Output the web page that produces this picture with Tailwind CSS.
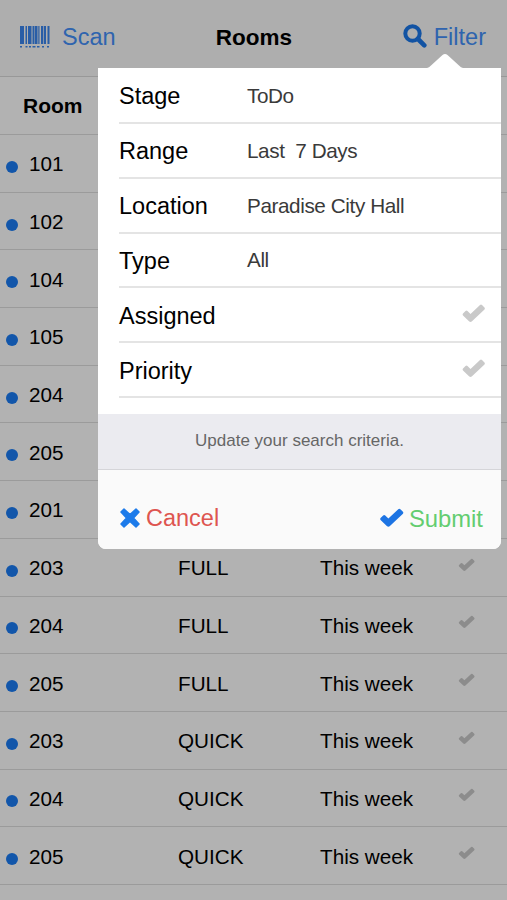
<!DOCTYPE html>
<html lang="en">
<head>
  <meta charset="UTF-8" />
  <meta name="viewport" content="width=device-width, initial-scale=1.0"/>
  <title>Rooms</title>

  <!-- Tailwind CSS -->
  <script src="https://cdn.jsdelivr.net/npm/@tailwindcss/browser@4"></script>
</head>
<body class="relative h-[900px] overflow-hidden bg-white font-['Liberation_Sans',Arial,sans-serif] text-black">

  <!-- Icons -->
  <svg class="hidden">
    <symbol id="check" viewBox="0 0 24 19">
      <path d="M1.500 9.500L4 7Q5 6 6 7L9 10L18.500 1Q19.500 0 20.500 1L23 3.500Q23.800 4.500 23 5.500L10.500 17.300Q9 18.600 7.500 17.300L1.500 11.500Q0.600 10.500 1.500 9.500z" fill="currentColor"/>
    </symbol>
  </svg>

  <!-- Nav bar -->
  <header class="grid h-[77px] grid-cols-3 items-center border-b border-[#dadada] bg-[#f9f9f9] pt-[1px] pb-[2px] pl-5 pr-[21px]">
    <button class="flex items-center gap-3 text-[23.5px] text-[#4490fa]">
      <svg class="-mt-[2px] h-[22px] w-[30px] text-[#3b86ee]" viewBox="0 0 30 22" fill="currentColor">
        <path d="M0 0h4v18H0zM5.500 0h1.500v18h-1.500zM8 0h3.500v18H8zM12.500 0h2v18h-2zM15 0h2.500v18H15zM18.300 0h1.200v18h-1.200zM21 0h2v18h-2zM23.700 0h2.300v18h-2.300zM27.500 0h2v18h-2z"/>
        <path d="M0 20h2v1.500H0zM5.500 20h2v1.500h-2zM9 20h2v1.500H9zM12.500 20h3v1.500h-3zM17 20h2.500v1.500H17zM22 20h2v1.500h-2zM27 20h2v1.500h-2z"/>
      </svg>
      <span class="pt-px">Scan</span>
    </button>
    <h1 class="pl-[2px] text-center text-[22.5px] font-bold">Rooms</h1>
    <button class="flex items-center justify-end gap-[7px] text-[23.5px] text-[#4490fa]">
      <svg class="-mt-[3px] h-6 w-6 text-[#1b78ea]" viewBox="0 0 24 24" fill="none" stroke="currentColor">
        <circle cx="9.500" cy="9.500" r="7.200" stroke-width="4"/>
        <path d="M15 15L21.300 21.300" stroke-width="4.600" stroke-linecap="round"/>
      </svg>
      <span class="pt-px">Filter</span>
    </button>
  </header>

  <!-- Room list -->
  <div class="flex h-[58px] items-center border-b border-[#dedede] pl-[23px] text-[21px] font-bold">Room</div>
  <div id="roomList"></div>

  <!-- Dimmed backdrop -->
  <div class="absolute inset-0 bg-black/30"></div>

  <!-- Filter popover -->
  <div class="absolute left-[98px] top-[54px] w-[403px]">
    <svg class="ml-[329px] block h-[14px] w-9" viewBox="0 0 36 14"><path d="M0 14Q2 13.500 4 11.500L15.500 1Q18 -1 20.500 1L32 11.500Q34 13.500 36 14z" fill="#fff"/></svg>
    <div class="overflow-hidden rounded-b-[8px] bg-white">
      <div id="filters" class="h-[345.500px] pt-px pl-[21px]"></div>
      <div class="flex h-[56px] items-center justify-center border-b border-[#d5d5d9] bg-[#ebebf0] text-[17px] text-[#666]">Update your search criteria.</div>
      <div class="flex h-[79px] items-center justify-between bg-[#fafafa] pt-[20px] pr-[18px] pl-[22px] text-[23.500px]">
        <button class="flex items-center gap-[6px] text-[#de5550]">
          <svg class="-mt-[3px] h-5 w-5 text-[#1d7bea]" viewBox="0 0 20 20"><path d="M4 1L10 6.500L16 1L19 4L13.500 10L19 16L16 19L10 13.500L4 19L1 16L6.500 10L1 4z" fill="currentColor" stroke="currentColor" stroke-width="1.500" stroke-linejoin="round"/></svg>
          <span>Cancel</span>
        </button>
        <button class="flex items-center gap-[5px] text-[#63cd70]">
          <svg class="-mt-[3px] h-[20px] w-[25px] text-[#1d74e3]"><use href="#check"/></svg>
          <span class="text-[23.800px]">Submit</span>
        </button>
      </div>
    </div>
  </div>

  <script>
    const rooms = [
      ['101'], ['102'], ['104'], ['105'], ['204'], ['205'], ['201'],
      ['203', 'FULL', 'This week'],
      ['204', 'FULL', 'This week'],
      ['205', 'FULL', 'This week'],
      ['203', 'QUICK', 'This week'],
      ['204', 'QUICK', 'This week'],
      ['205', 'QUICK', 'This week'],
    ];

    document.getElementById('roomList').innerHTML = rooms.map(([room, type = '', due = '']) => `
      <div class="grid h-[57.700px] grid-cols-[23px_149px_142px_138px_1fr] items-center border-b border-[#dedede] pt-[1px] pl-[6px] text-[20.700px]">
        <span class="mt-[6px] h-[12px] w-[12px] rounded-full bg-[#1b7cf4]"></span>
        <span>${room}</span>
        <span>${type}</span>
        <span>${due}</span>
        <svg class="-mt-[6px] h-[14px] w-[17px] text-[#c9c9c9]"><use href="#check"/></svg>
      </div>`).join('');

    const filters = [
      ['Stage', 'ToDo'],
      ['Range', 'Last  7 Days'],
      ['Location', 'Paradise City Hall'],
      ['Type', 'All'],
      ['Assigned', null],
      ['Priority', null],
    ];

    document.getElementById('filters').innerHTML = filters.map(([label, value]) => `
      <div class="flex h-[54.850px] items-center border-b-2 border-[#e4e4e4] pt-[3px] pr-[15px]">
        <span class="w-[128px] text-[23.500px]">${label}</span>
        ${value
          ? `<span class="-mt-[3px] whitespace-pre text-[20.700px] tracking-[-0.4px] text-[#3a3a3a]">${value}</span>`
          : `<svg class="-mt-[6px] ml-auto h-[19px] w-[25px] text-[#c9c9c9]"><use href="#check"/></svg>`}
      </div>`).join('');
  </script>

</body>
</html>
